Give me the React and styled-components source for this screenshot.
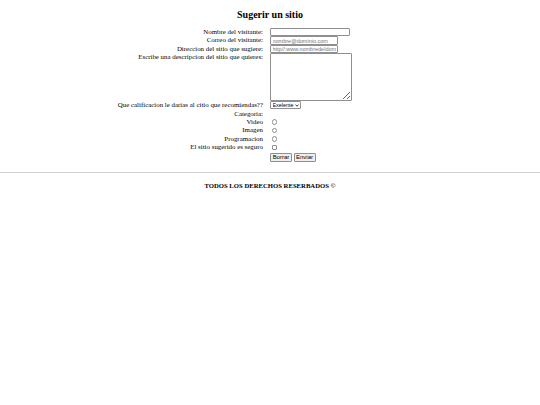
import styled, { createGlobalStyle } from "styled-components";

const Global = createGlobalStyle`
  body {
    margin: 0;
    background: #fff;
    color: #000;
    font-family: "Liberation Serif", "Times New Roman", serif;
    font-size: 6.9px;
  }
`;

const Page = styled.div`
  display: flex;
  flex-direction: column;
  padding-top: 3px;
`;

const Title = styled.h2`
  margin: 6px 0 7px;
  text-align: center;
  font-size: 10px;
  font-weight: bold;
  line-height: 12px;
`;

const Form = styled.form`
  display: grid;
  grid-template-columns: 1fr 1fr;
  column-gap: 7px;
  padding-right: 7px;
  align-items: start;
`;

const Label = styled.div`
  text-align: right;
  line-height: ${(p) => p.$h || 8.4}px;
  height: ${(p) => p.$h || 8.4}px;
  white-space: nowrap;
`;

const Cell = styled.div`
  display: flex;
  align-items: center;
  gap: 2px;
  min-height: ${(p) => p.$h || 8.4}px;
`;

const TextInput = styled.input`
  box-sizing: border-box;
  width: ${(p) => p.$w}px;
  height: 8.4px;
  margin: 0;
  padding: 0 1.5px;
  border: 1px solid #8f8f8f;
  border-radius: 1px;
  font-family: "Liberation Sans", Arial, sans-serif;
  font-size: 5.5px;
  &::placeholder {
    color: #757575;
  }
`;

const TextArea = styled.textarea`
  box-sizing: border-box;
  width: 82px;
  height: 48px;
  margin: 0;
  padding: 1px;
  border: 1px solid #8f8f8f;
  border-radius: 1px;
  resize: both;
  font-size: 5.4px;
`;

const SelectBox = styled.span`
  position: relative;
  display: inline-flex;
`;

const Select = styled.select`
  box-sizing: border-box;
  width: 31px;
  height: 8px;
  margin: 0;
  padding: 0 0 0 1.5px;
  appearance: none;
  border: 1px solid #8f8f8f;
  border-radius: 1px;
  background: #fff;
  font-family: "Liberation Sans", Arial, sans-serif;
  font-size: 5.4px;
  line-height: 6px;
  color: #000;
`;

const Chevron = styled.svg`
  position: absolute;
  right: 2.5px;
  top: 2.5px;
  width: 4px;
  height: 3px;
  pointer-events: none;
`;

const Radio = styled.input`
  box-sizing: border-box;
  width: 5.4px;
  height: 5.4px;
  margin: 0 0 0 2px;
  appearance: none;
  border: 0.8px solid #8f8f8f;
  border-radius: ${(p) => (p.type === "checkbox" ? "1px" : "50%")};
  background: #fff;
`;

const Buttons = styled.div`
  display: flex;
  gap: 1.5px;
  padding-top: 1px;
`;

const Button = styled.button`
  box-sizing: border-box;
  height: 9.5px;
  width: ${(p) => p.$w}px;
  margin: 0;
  padding: 0;
  border: 1px solid #8f8f8f;
  border-radius: 1px;
  background: #efefef;
  font-family: "Liberation Sans", Arial, sans-serif;
  font-size: 6px;
  color: #000;
`;

const Rule = styled.hr`
  margin: 10px 0 0;
  border: none;
  border-top: 1px solid #cfcfcf;
`;

const Footer = styled.footer`
  margin-top: 9px;
  text-align: center;
  font-weight: bold;
  font-size: 6.7px;
`;

export default function App() {
  return (
    <Page>
      <Global />
      <Title>Sugerir un sitio</Title>
      <Form onSubmit={(e) => e.preventDefault()}>
        <Label>Nombre del visitante:</Label>
        <Cell>
          <TextInput $w={80} type="text" />
        </Cell>

        <Label>Correo del visitante:</Label>
        <Cell>
          <TextInput $w={68} type="email" placeholder="nombre@dominio.com" />
        </Cell>

        <Label>Direccion del sitio que sugiere:</Label>
        <Cell>
          <TextInput $w={68} type="url" placeholder="http//:www.nombredeldominio.com" />
        </Cell>

        <Label>Escribe una descripcion del sitio que quieres:</Label>
        <Cell $h={48}>
          <TextArea />
        </Cell>

        <Label>Que calificacion le darias al citio que recomiendas??</Label>
        <Cell>
          <SelectBox>
            <Select defaultValue="exelente">
              <option value="exelente">Exelente</option>
              <option value="bueno">Bueno</option>
              <option value="regular">Regular</option>
              <option value="malo">Malo</option>
            </Select>
            <Chevron viewBox="0 0 8 6">
              <path d="M1 1.2 L4 4.4 L7 1.2" fill="none" stroke="#000" strokeWidth="1.6" />
            </Chevron>
          </SelectBox>
        </Cell>

        <Label>Categoria:</Label>
        <Cell />

        <Label>Video</Label>
        <Cell>
          <Radio type="radio" name="cat" />
        </Cell>

        <Label>Imagen</Label>
        <Cell>
          <Radio type="radio" name="cat" />
        </Cell>

        <Label>Programacion</Label>
        <Cell>
          <Radio type="radio" name="cat" />
        </Cell>

        <Label>El sitio sugerido es seguro</Label>
        <Cell>
          <Radio type="checkbox" />
        </Cell>

        <Label />
        <Cell $h={10}>
          <Buttons>
            <Button $w={22} type="reset">Borrar</Button>
            <Button $w={22} type="submit">Enviar</Button>
          </Buttons>
        </Cell>
      </Form>
      <Rule />
      <Footer>TODOS LOS DERECHOS RESERBADOS ©</Footer>
    </Page>
  );
}
